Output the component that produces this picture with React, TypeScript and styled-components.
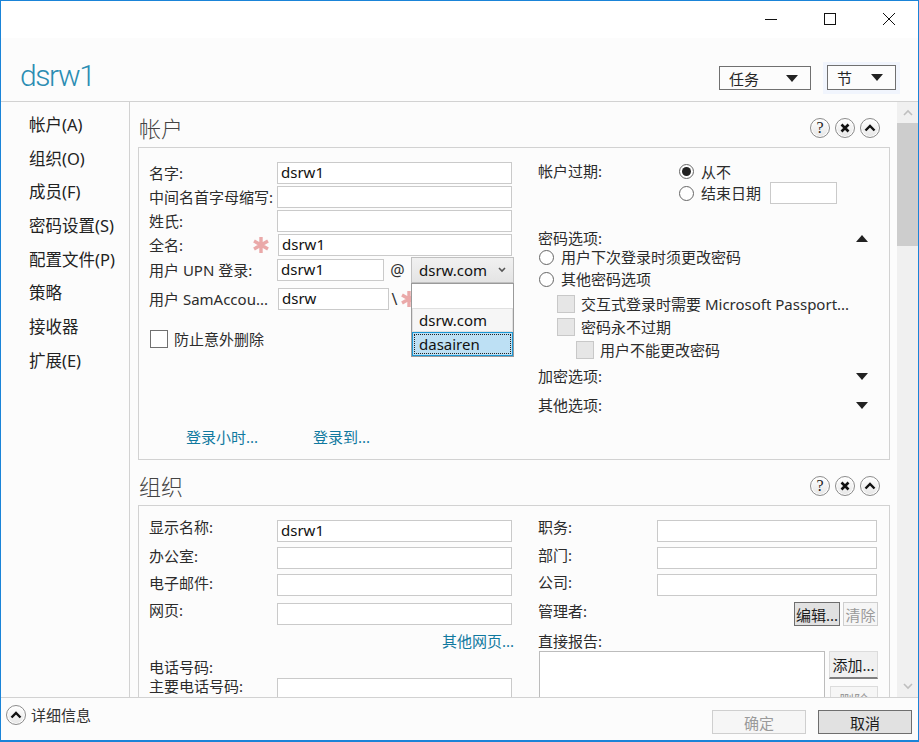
import React from "react";
import styled, { createGlobalStyle } from "styled-components";

const GlobalStyle = createGlobalStyle`
  html, body { margin: 0; padding: 0; background: #fff; }
  * { box-sizing: border-box; }
  body {
    font-family: "Noto Sans", "Noto Sans CJK SC", sans-serif;
    font-size: 15px;
    color: #262626;
  }
`;

const Window = styled.div`
  width: 919px;
  height: 742px;
  border: 1px solid #1a84d8;
  border-width: 1px 1px 2px 1px;
  display: flex;
  flex-direction: column;
  overflow: hidden;
  background: #fcfcfc;
`;

const TitleBar = styled.div`
  height: 37px;
  flex: none;
  background: #fff;
  display: flex;
  justify-content: flex-end;
  align-items: center;
  padding: 0 20px 2px 0;
  gap: 41px;
`;

const CaptionIcon = styled.svg`
  width: 18px;
  height: 18px;
  stroke: #111;
  stroke-width: 1;
  fill: none;
  display: block;
`;

const Header = styled.div`
  height: 64px;
  flex: none;
  border-bottom: 1px solid #d2d2d2;
  display: flex;
  align-items: flex-start;
  padding: 0 18px 0 19px;
`;

const Title = styled.div`
  font-family: "Roboto", "Noto Sans", sans-serif;
  font-size: 30px;
  font-weight: 300;
  letter-spacing: -1.4px;
  line-height: 40px;
  margin-top: 18px;
  color: #2b8db3;
  flex: 1;
`;

const MenuFocus = styled.div<{ $focused?: boolean }>`
  padding: 3px 4px 4px;
  margin-left: ${(p) => (p.$focused ? "8px" : "0")};
  margin-top: ${(p) => (p.$focused ? "24px" : "25px")};
  background: ${(p) => (p.$focused ? "#f1f5fd" : "transparent")};
`;

const MenuButton = styled.div<{ $width: number; $height: number }>`
  width: ${(p) => p.$width}px;
  height: ${(p) => p.$height}px;
  border: 1px solid #707070;
  background: #fcfcfc;
  display: flex;
  align-items: center;
  justify-content: space-between;
  padding: 0 12px 0 9px;
`;

const Triangle = styled.span<{ $up?: boolean }>`
  width: 0;
  height: 0;
  flex: none;
  border-left: 6px solid transparent;
  border-right: 6px solid transparent;
  ${(p) => (p.$up ? "border-bottom: 7px solid #222;" : "border-top: 7px solid #222;")}
`;

const Body = styled.div`
  flex: 1;
  min-height: 0;
  display: flex;
`;

const Sidebar = styled.nav`
  width: 129px;
  flex: none;
  border-right: 1px solid #d2d2d2;
  padding: 6px 0 0 28px;
  display: flex;
  flex-direction: column;
`;

const NavItem = styled.div`
  height: 33.7px;
  line-height: 33.7px;
  white-space: nowrap;
  font-size: 16.5px;
  color: #222;
`;

const Main = styled.main`
  flex: 1;
  min-width: 0;
  overflow: hidden;
  padding-left: 8px;
`;

const SectionHeader = styled.div`
  width: 752px;
  height: 45px;
  padding: 7px 10px 0 0;
  display: flex;
  align-items: center;
  justify-content: space-between;
`;

const SectionTitle = styled.h2`
  margin: 0 0 0 1px;
  font-size: 22px;
  font-weight: 300;
  color: #444;
  line-height: 30px;
`;

const RoundGroup = styled.div`
  display: flex;
  gap: 5px;
`;

const RoundButton = styled.button`
  width: 20px;
  height: 20px;
  padding: 0;
  border: 1px solid #8c8c8c;
  border-radius: 50%;
  background: linear-gradient(#ffffff, #e6e6e6);
  box-shadow: inset 0 0 0 1px #fff;
  display: flex;
  align-items: center;
  justify-content: center;
  font-family: "Liberation Serif", serif;
  font-size: 16px;
  line-height: 1;
  color: #222;
`;

const Panel = styled.section<{ $height: number }>`
  width: 752px;
  height: ${(p) => p.$height}px;
  border: 1px solid #d2d2d2;
  padding: 14px 0 0 10px;
  display: grid;
  grid-template-columns: 389px 1fr;
`;

const Column = styled.div<{ $raise?: number }>`
  display: flex;
  flex-direction: column;
  min-width: 0;
  margin-top: ${(p) => -(p.$raise ?? 0)}px;
`;

const Row = styled.div<{ $top?: number; $height?: number }>`
  display: flex;
  align-items: center;
  margin-top: ${(p) => p.$top ?? 0}px;
  height: ${(p) => p.$height ?? 22}px;
  position: relative;
`;

const Label = styled.label<{ $width?: number; $lift?: number }>`
  width: ${(p) => (p.$width ? `${p.$width}px` : "auto")};
  flex: none;
  display: flex;
  align-items: center;
  justify-content: space-between;
  padding-right: ${(p) => (p.$width ? "8px" : "0")};
  white-space: nowrap;
  line-height: 20px;
  position: relative;
  top: ${(p) => -(p.$lift ?? 0)}px;
  color: #2c2c2c;
`;

const TextBox = styled.div<{ $width: number; $left?: number }>`
  width: ${(p) => p.$width}px;
  margin-left: ${(p) => p.$left ?? 0}px;
  height: 22px;
  flex: none;
  border: 1px solid #cacaca;
  background: #fff;
  padding: 0 3px;
  line-height: 19px;
  color: #111;
`;

const Star = styled.svg`
  width: 18px;
  height: 18px;
  flex: none;
  stroke: #eaa9a9;
  stroke-width: 3.4;
  display: block;
`;

const Separator = styled.span<{ $width: number }>`
  width: ${(p) => p.$width}px;
  flex: none;
  text-align: center;
  font-size: 16px;
  color: #333;
`;

const Dropdown = styled.div`
  position: absolute;
  left: 262px;
  top: 0;
  width: 103px;
  height: 26px;
  border: 1px solid #c0c0c0;
  background: linear-gradient(#f1f1f1, #e4e4e4);
  display: flex;
  align-items: center;
  justify-content: space-between;
  padding: 0 7px 0 7px;
  color: #111;
  z-index: 2;
`;

const Popup = styled.div`
  position: absolute;
  left: 262px;
  top: 26px;
  width: 103px;
  height: 74px;
  border: 1px solid #9a9a9a;
  background: #fff;
  z-index: 3;
  padding-top: 24px;
`;

const PopupOption = styled.div<{ $selected?: boolean }>`
  height: 24px;
  padding: 0 6px;
  line-height: 22px;
  color: #111;
  border: 1px solid ${(p) => (p.$selected ? "#1c97d4" : "#e0e0e0")};
  background: ${(p) => (p.$selected ? "#bde0f4" : "#f6f6f6")};
  ${(p) => (p.$selected ? "outline: 1px dotted #222; outline-offset: -3px;" : "")}
`;

const Check = styled.span<{ $disabled?: boolean; $left?: number }>`
  width: 18px;
  height: 18px;
  flex: none;
  margin-left: ${(p) => p.$left ?? 0}px;
  margin-right: 6px;
  border: 1px solid ${(p) => (p.$disabled ? "#c8c8c8" : "#707070")};
  background: ${(p) => (p.$disabled ? "#e6e6e6" : "#fff")};
`;

const Radio = styled.span<{ $checked?: boolean; $left?: number }>`
  width: 15px;
  height: 15px;
  flex: none;
  margin-left: ${(p) => p.$left ?? 0}px;
  margin-right: 7px;
  border: 1px solid #666;
  border-radius: 50%;
  background: #fff;
  display: flex;
  align-items: center;
  justify-content: center;
  &::after {
    content: "";
    width: 9px;
    height: 9px;
    border-radius: 50%;
    background: ${(p) => (p.$checked ? "#222" : "transparent")};
  }
`;

const LinkRow = styled.div`
  display: flex;
  margin-top: 79px;
  padding-left: 37px;
  gap: 55px;
  line-height: 20px;
`;

const LinkText = styled.a`
  color: #10799f;
  font-size: 15px;
  white-space: nowrap;
`;

const OptionHeader = styled.div<{ $top?: number }>`
  width: 330px;
  height: 20px;
  margin-top: ${(p) => p.$top ?? 0}px;
  display: flex;
  align-items: center;
  justify-content: space-between;
  line-height: 20px;
  white-space: nowrap;
  color: #2c2c2c;
`;

const OptionLine = styled.div<{ $top?: number }>`
  height: 20px;
  margin-top: ${(p) => p.$top ?? 0}px;
  display: flex;
  align-items: center;
  white-space: nowrap;
  line-height: 20px;
  color: #2c2c2c;
`;

const RightAligned = styled.div`
  width: 365px;
  margin-top: 6px;
  height: 20px;
  line-height: 20px;
  text-align: right;
`;

const ActionButton = styled.div<{ $width: number; $height: number; $left?: number; $pressed?: boolean; $disabled?: boolean }>`
  width: ${(p) => p.$width}px;
  height: ${(p) => p.$height}px;
  flex: none;
  margin-left: ${(p) => p.$left ?? 0}px;
  border: 1px solid ${(p) => (p.$pressed ? "#6e6e6e" : "#cfcfcf")};
  background: ${(p) => (p.$pressed ? "#e1e1e1" : p.$disabled ? "#f6f6f6" : "#f0f0f0")};
  color: ${(p) => (p.$disabled ? "#9a9a9a" : "#1c1c1c")};
  display: flex;
  align-items: center;
  justify-content: center;
  white-space: nowrap;
  font-size: 15px;
`;

const RaisedButton = styled(ActionButton)`
  border-color: #dcdcdc #dcdcdc #7f7f7f #dcdcdc;
  border-bottom-width: 2px;
`;

const Spacer = styled.div<{ $fixed?: number }>`
  flex: ${(p) => (p.$fixed ? `0 0 ${p.$fixed}px` : "1")};
`;

const ListArea = styled.div`
  width: 286px;
  height: 120px;
  flex: none;
  margin-left: 1px;
  border: 1px solid #bcbcbc;
  background: #fff;
`;

const ReportRow = styled.div`
  display: flex;
  align-items: flex-start;
`;

const ReportButtons = styled.div`
  display: flex;
  flex-direction: column;
  align-items: flex-end;
  gap: 7px;
  margin-left: 4px;
`;

const Scrollbar = styled.div`
  width: 21px;
  flex: none;
  background: #f0f0f0;
  display: flex;
  flex-direction: column;
`;

const ScrollArrow = styled.div`
  height: 21px;
  flex: none;
  display: flex;
  align-items: center;
  justify-content: center;
`;

const ScrollThumb = styled.div`
  height: 123px;
  flex: none;
  background: #cdcdcd;
`;

const Chevron = styled.svg<{ $stroke?: string }>`
  display: block;
  fill: none;
  stroke: ${(p) => p.$stroke ?? "#bfbfbf"};
  stroke-width: 1.6;
`;

const Footer = styled.footer`
  height: 43px;
  flex: none;
  border-top: 1px solid #d2d2d2;
  background: #fcfcfc;
  display: flex;
  padding: 7px 6px 0 5px;
  align-items: flex-start;
`;

const DetailsLabel = styled.span`
  margin-left: 5px;
  line-height: 20px;
  color: #333;
`;

const FooterButtons = styled.div`
  margin-left: auto;
  margin-top: 5px;
  display: flex;
  gap: 12px;
`;

const ChevronUpIcon = () => (
  <svg width="12" height="10" viewBox="0 0 12 10" fill="none" stroke="#111" strokeWidth="2.4">
    <path d="M1.5 7.5 L6 3 L10.5 7.5" />
  </svg>
);

const CloseIcon = () => (
  <svg width="10" height="10" viewBox="0 0 10 10" fill="none" stroke="#111" strokeWidth="2.6">
    <path d="M1.5 1.5 L8.5 8.5 M8.5 1.5 L1.5 8.5" />
  </svg>
);

const SectionControls = () => (
  <RoundGroup>
    <RoundButton>?</RoundButton>
    <RoundButton>
      <CloseIcon />
    </RoundButton>
    <RoundButton>
      <ChevronUpIcon />
    </RoundButton>
  </RoundGroup>
);

const RequiredStar = () => (
  <Star viewBox="0 0 18 18">
    <path d="M9 1 V17 M2 5 L16 13 M16 5 L2 13" />
  </Star>
);

const navItems = ["帐户(A)", "组织(O)", "成员(F)", "密码设置(S)", "配置文件(P)", "策略", "接收器", "扩展(E)"];

export default function App() {
  return (
    <>
      <GlobalStyle />
      <Window>
        <TitleBar>
          <CaptionIcon viewBox="0 0 18 18">
            <path d="M3 9.5 H15" />
          </CaptionIcon>
          <CaptionIcon viewBox="0 0 18 18">
            <rect x="3.5" y="3.5" width="11" height="11" />
          </CaptionIcon>
          <CaptionIcon viewBox="0 0 18 18">
            <path d="M3 3 L15 15 M15 3 L3 15" />
          </CaptionIcon>
        </TitleBar>

        <Header>
          <Title>dsrw1</Title>
          <MenuFocus>
            <MenuButton $width={92} $height={24}>
              任务
              <Triangle />
            </MenuButton>
          </MenuFocus>
          <MenuFocus $focused>
            <MenuButton $width={69} $height={25}>
              节
              <Triangle />
            </MenuButton>
          </MenuFocus>
        </Header>

        <Body>
          <Sidebar>
            {navItems.map((item) => (
              <NavItem key={item}>{item}</NavItem>
            ))}
          </Sidebar>

          <Main>
            <SectionHeader>
              <SectionTitle>帐户</SectionTitle>
              <SectionControls />
            </SectionHeader>
            <Panel $height={313}>
              <Column>
                <Row>
                  <Label $width={128}>名字:</Label>
                  <TextBox $width={235}>dsrw1</TextBox>
                </Row>
                <Row $top={2}>
                  <Label $width={128}>中间名首字母缩写:</Label>
                  <TextBox $width={235} />
                </Row>
                <Row $top={2}>
                  <Label $width={128}>姓氏:</Label>
                  <TextBox $width={235} />
                </Row>
                <Row $top={2}>
                  <Label $width={129}>
                    全名:
                    <RequiredStar />
                  </Label>
                  <TextBox $width={234}>dsrw1</TextBox>
                </Row>
                <Row $top={1} $height={26}>
                  <Label $width={128}>用户 UPN 登录:</Label>
                  <TextBox $width={107}>dsrw1</TextBox>
                  <Separator $width={27}>@</Separator>
                  <Dropdown>
                    dsrw.com
                    <Chevron width="8" height="6" viewBox="0 0 8 6" $stroke="#555">
                      <path d="M1 1 L4 4 L7 1" />
                    </Chevron>
                  </Dropdown>
                  <Popup>
                    <PopupOption>dsrw.com</PopupOption>
                    <PopupOption $selected>dasairen</PopupOption>
                  </Popup>
                </Row>
                <Row $top={5}>
                  <Label $width={129}>用户 SamAccou...</Label>
                  <TextBox $width={111}>dsrw</TextBox>
                  <Separator $width={11}>\</Separator>
                  <RequiredStar />
                </Row>
                <Row $top={20} $height={18}>
                  <Check $left={1} />
                  <Label>防止意外删除</Label>
                </Row>
                <LinkRow>
                  <LinkText>登录小时...</LinkText>
                  <LinkText>登录到...</LinkText>
                </LinkRow>
              </Column>

              <Column $raise={1}>
                <Row $height={21}>
                  <Label $width={141} $lift={1}>帐户过期:</Label>
                  <Radio $checked />
                  <Label>从不</Label>
                </Row>
                <Row>
                  <Label $width={141} />
                  <Radio />
                  <Label>结束日期</Label>
                  <TextBox $width={67} $left={9} />
                </Row>
                <OptionHeader $top={24}>
                  密码选项:
                  <Triangle $up />
                </OptionHeader>
                <OptionLine $top={-1}>
                  <Radio $left={1} />
                  用户下次登录时须更改密码
                </OptionLine>
                <OptionLine $top={2}>
                  <Radio $left={1} />
                  其他密码选项
                </OptionLine>
                <OptionLine $top={5}>
                  <Check $disabled $left={19} />
                  交互式登录时需要 Microsoft Passport...
                </OptionLine>
                <OptionLine $top={3}>
                  <Check $disabled $left={19} />
                  密码永不过期
                </OptionLine>
                <OptionLine $top={3}>
                  <Check $disabled $left={38} />
                  用户不能更改密码
                </OptionLine>
                <OptionHeader $top={6}>
                  加密选项:
                  <Triangle />
                </OptionHeader>
                <OptionHeader $top={9}>
                  其他选项:
                  <Triangle />
                </OptionHeader>
              </Column>
            </Panel>

            <SectionHeader>
              <SectionTitle>组织</SectionTitle>
              <SectionControls />
            </SectionHeader>
            <Panel $height={260}>
              <Column>
                <Row>
                  <Label $width={128} $lift={4}>显示名称:</Label>
                  <TextBox $width={235}>dsrw1</TextBox>
                </Row>
                <Row $top={5}>
                  <Label $width={128} $lift={2}>办公室:</Label>
                  <TextBox $width={235} />
                </Row>
                <Row $top={5}>
                  <Label $width={128} $lift={2}>电子邮件:</Label>
                  <TextBox $width={235} />
                </Row>
                <Row $top={7}>
                  <Label $width={128} $lift={4}>网页:</Label>
                  <TextBox $width={235} />
                </Row>
                <RightAligned>
                  <LinkText>其他网页...</LinkText>
                </RightAligned>
                <Row $top={6} $height={20}>
                  <Label>电话号码:</Label>
                </Row>
                <Row $top={1}>
                  <Label $width={128} $lift={3}>主要电话号码:</Label>
                  <TextBox $width={235} />
                </Row>
              </Column>

              <Column>
                <Row>
                  <Label $width={119} $lift={4}>职务:</Label>
                  <TextBox $width={220} />
                </Row>
                <Row $top={5}>
                  <Label $width={119} $lift={3}>部门:</Label>
                  <TextBox $width={220} />
                </Row>
                <Row $top={5}>
                  <Label $width={119} $lift={3}>公司:</Label>
                  <TextBox $width={220} />
                </Row>
                <Row $top={6} $height={24}>
                  <Label $lift={3}>管理者:</Label>
                  <Spacer />
                  <ActionButton $width={46} $height={24} $pressed>编辑...</ActionButton>
                  <ActionButton $width={35} $height={24} $left={3} $disabled>清除</ActionButton>
                  <Spacer $fixed={11} />
                </Row>
                <Row $top={4} $height={21}>
                  <Label>直接报告:</Label>
                </Row>
                <ReportRow>
                  <ListArea />
                  <ReportButtons>
                    <RaisedButton $width={49} $height={28}>添加...</RaisedButton>
                    <RaisedButton $width={48} $height={28} $disabled>删除</RaisedButton>
                  </ReportButtons>
                </ReportRow>
              </Column>
            </Panel>
          </Main>

          <Scrollbar>
            <ScrollArrow>
              <Chevron width="10" height="7" viewBox="0 0 10 7">
                <path d="M1 6 L5 2 L9 6" />
              </Chevron>
            </ScrollArrow>
            <ScrollThumb />
            <Spacer />
            <ScrollArrow>
              <Chevron width="10" height="7" viewBox="0 0 10 7">
                <path d="M1 1 L5 5 L9 1" />
              </Chevron>
            </ScrollArrow>
          </Scrollbar>
        </Body>

        <Footer>
          <RoundButton>
            <ChevronUpIcon />
          </RoundButton>
          <DetailsLabel>详细信息</DetailsLabel>
          <FooterButtons>
            <ActionButton $width={94} $height={24} $disabled>确定</ActionButton>
            <ActionButton $width={94} $height={24} $pressed>取消</ActionButton>
          </FooterButtons>
        </Footer>
      </Window>
    </>
  );
}
